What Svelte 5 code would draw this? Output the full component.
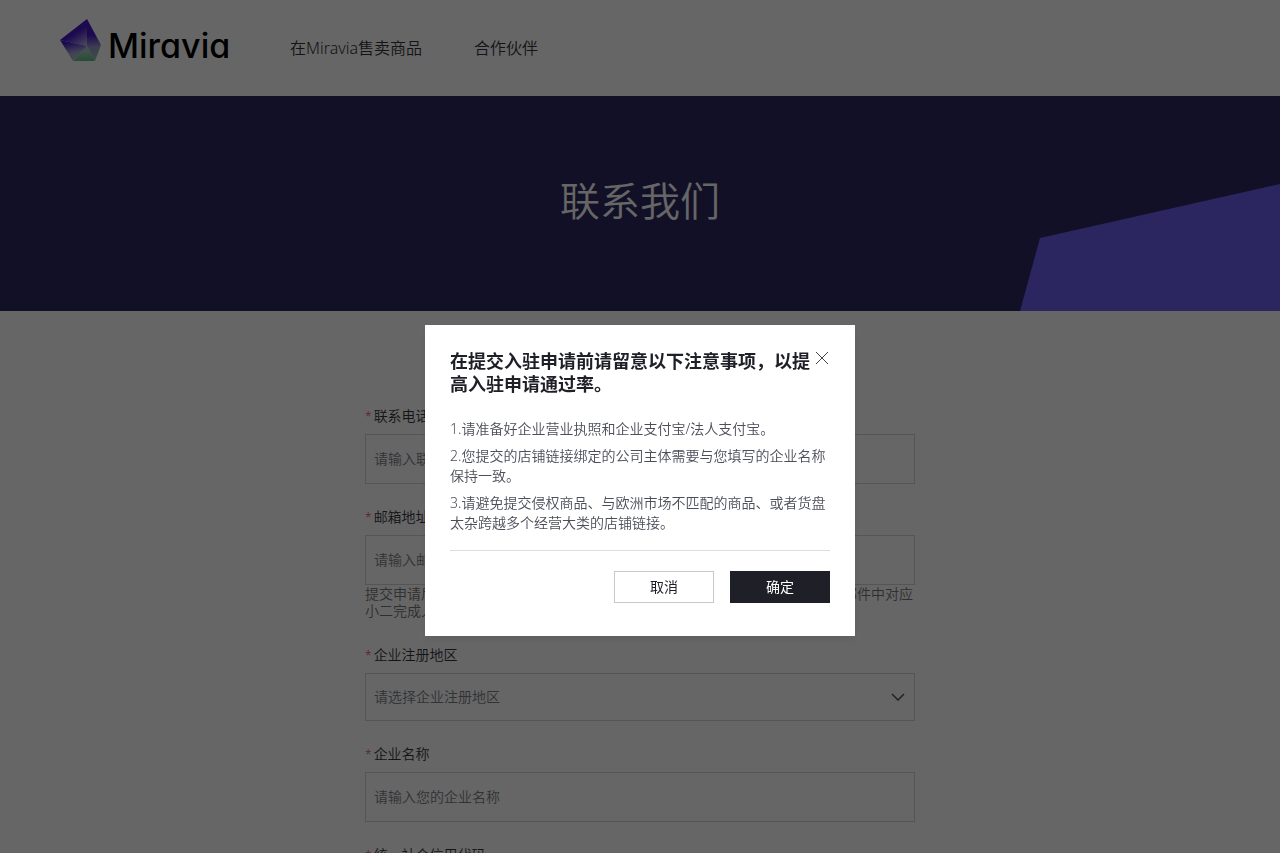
<script lang="ts">
	type Field = {
		id: string;
		label: string;
		placeholder: string;
		type: 'text' | 'tel' | 'email' | 'select';
		help?: string;
	};

	const navLinks = [
		{ name: '在Miravia售卖商品', href: '#sell' },
		{ name: '合作伙伴', href: '#partners' }
	];

	const fields: Field[] = [
		{ id: 'phone', label: '联系电话', placeholder: '请输入联系电话', type: 'tel' },
		{
			id: 'email',
			label: '邮箱地址',
			placeholder: '请输入邮箱地址',
			type: 'email',
			help: '提交申请后，我们会在10个工作日内通过邮件联系您，请留意邮箱通知，并与邮件中对应小二完成入驻。'
		},
		{ id: 'region', label: '企业注册地区', placeholder: '请选择企业注册地区', type: 'select' },
		{ id: 'company', label: '企业名称', placeholder: '请输入您的企业名称', type: 'text' },
		{ id: 'code', label: '统一社会信用代码', placeholder: '请输入统一社会信用代码', type: 'text' }
	];

	const notices = [
		'1.请准备好企业营业执照和企业支付宝/法人支付宝。',
		'2.您提交的店铺链接绑定的公司主体需要与您填写的企业名称保持一致。',
		'3.请避免提交侵权商品、与欧洲市场不匹配的商品、或者货盘太杂跨越多个经营大类的店铺链接。'
	];

	let open = $state(true);

	const close = (): void => {
		open = false;
	};
</script>

<svelte:head>
	<title>联系我们 | Miravia</title>
</svelte:head>

<header class="header">
	<a class="logo" href="#home" aria-label="Miravia">
		<svg width="41" height="43" viewBox="0 0 41 43" aria-hidden="true">
			<defs>
				<linearGradient id="gem-left" gradientUnits="userSpaceOnUse" x1="12" y1="8" x2="24" y2="27">
					<stop offset="0.3" stop-color="#4618c4" />
					<stop offset="1" stop-color="#b4aee6" />
				</linearGradient>
				<linearGradient id="gem-right" gradientUnits="userSpaceOnUse" x1="30" y1="2" x2="32" y2="42">
					<stop offset="0.35" stop-color="#4618c4" />
					<stop offset="0.65" stop-color="#9c98cc" />
					<stop offset="1" stop-color="#8cc4a4" />
				</linearGradient>
				<linearGradient id="gem-side" gradientUnits="userSpaceOnUse" x1="8" y1="20" x2="13" y2="42">
					<stop offset="0.15" stop-color="#4618c4" />
					<stop offset="0.65" stop-color="#a8a4d8" />
					<stop offset="1" stop-color="#9ccab4" />
				</linearGradient>
				<linearGradient id="gem-base" gradientUnits="userSpaceOnUse" x1="24" y1="24" x2="26" y2="42">
					<stop offset="0" stop-color="#b4b4d4" />
					<stop offset="0.5" stop-color="#a0ccb8" />
					<stop offset="1" stop-color="#5cc084" />
				</linearGradient>
			</defs>
			<path d="M27 27 35 42H13Z" fill="url(#gem-base)" />
			<path d="M27 0 0 21 27 27Z" fill="url(#gem-left)" />
			<path d="M27 0 27 27 35 42 41 26Z" fill="url(#gem-right)" />
			<path d="M0 21 13 42 27 27Z" fill="url(#gem-side)" />
		</svg>
		<span class="wordmark">Miravia</span>
	</a>
	<nav class="nav">
		{#each navLinks as link}
			<a href={link.href}>{link.name}</a>
		{/each}
	</nav>
</header>

<section class="banner">
	<h1>联系我们</h1>
	<svg class="banner-shape" width="260" height="127" viewBox="0 0 260 127" aria-hidden="true">
		<path d="M0 127 20 54 260 0V127Z" fill="#6c5cf0" />
	</svg>
</section>

<main>
	<form class="form">
		{#each fields as field}
			<div class="field">
				<label for={field.id}><span class="star">*</span>{field.label}</label>
				{#if field.type === 'select'}
					<div class="select">
						<select id={field.id}>
							<option value="">{field.placeholder}</option>
						</select>
						<svg width="14" height="8" viewBox="0 0 14 8" aria-hidden="true">
							<path d="M1 1 7 7 13 1" fill="none" stroke="#555" stroke-width="1.5" />
						</svg>
					</div>
				{:else}
					<input id={field.id} type={field.type} placeholder={field.placeholder} />
				{/if}
				{#if field.help}
					<p class="help">{field.help}</p>
				{/if}
			</div>
		{/each}
	</form>
</main>

{#if open}
	<div class="overlay">
		<div class="dialog" role="dialog" aria-modal="true" aria-labelledby="dialog-title">
			<h2 id="dialog-title">在提交入驻申请前请留意以下注意事项，以提高入驻申请通过率。</h2>
			<button class="close" type="button" aria-label="关闭" onclick={close}>
				<svg width="12" height="12" viewBox="0 0 12 12" aria-hidden="true">
					<path d="M0 0 12 12M12 0 0 12" fill="none" stroke="#444" />
				</svg>
			</button>
			<div class="notices">
				{#each notices as notice}
					<p>{notice}</p>
				{/each}
			</div>
			<div class="actions">
				<button type="button" onclick={close}>取消</button>
				<button class="primary" type="button" onclick={close}>确定</button>
			</div>
		</div>
	</div>
{/if}

<style>
	:global(body) {
		margin: 0;
		overflow: hidden;
		background: #fff;
		color: #33343c;
		font-family: 'Noto Sans', 'Noto Sans CJK SC', sans-serif;
		font-size: 14px;
		font-weight: 350;
	}

	a {
		color: inherit;
		text-decoration: none;
	}

	button,
	input,
	select {
		box-sizing: border-box;
		font: inherit;
		border-radius: 0;
	}

	.header {
		display: flex;
		align-items: center;
		height: 96px;
		padding: 0 60px;
	}

	.logo {
		display: flex;
		align-items: center;
		gap: 7px;
		width: 230px;
		height: 43px;
		padding-bottom: 16px;
	}

	.wordmark {
		padding-top: 12px;
		font-family: Inter, sans-serif;
		font-size: 34px;
		font-weight: 500;
		line-height: 42px;
		font-feature-settings: 'cv11';
		color: #000;
	}

	.nav {
		display: flex;
		gap: 52px;
		font-size: 16px;
		line-height: 24px;
	}

	.banner {
		position: relative;
		display: flex;
		align-items: center;
		justify-content: center;
		box-sizing: border-box;
		height: 215px;
		padding-bottom: 6px;
		background: #2d2861;
	}

	.banner h1 {
		margin: 0;
		font-size: 40px;
		font-weight: 350;
		line-height: 60px;
		color: #fff;
	}

	.banner-shape {
		position: absolute;
		right: 0;
		bottom: 0;
	}

	.form {
		max-width: 550px;
		margin: 0 auto;
		padding: 96px 16px;
	}

	.field {
		margin-bottom: 24px;
	}

	label {
		display: block;
		margin-bottom: 9px;
		line-height: 18px;
	}

	.star {
		margin-right: 2px;
		font-size: 12px;
		line-height: 1;
		color: #e8404a;
	}

	input,
	select {
		display: block;
		width: 100%;
		height: 50px;
		padding: 0 8px 2px;
		border: 1px solid #d4d4d8;
		background: #fff;
		color: #7c7e88;
	}

	input::placeholder {
		color: #7c7e88;
		opacity: 1;
	}

	.select {
		position: relative;
	}

	select {
		height: 48px;
		appearance: none;
	}

	.select svg {
		position: absolute;
		top: 20px;
		right: 10px;
		pointer-events: none;
	}

	.help {
		margin: 0;
		padding-bottom: 3px;
		line-height: 17px;
		color: #777;
	}

	.overlay {
		position: fixed;
		inset: 0;
		z-index: 10;
		display: flex;
		align-items: flex-start;
		justify-content: center;
		padding-top: 325px;
		background: rgba(0, 0, 0, 0.6);
	}

	.dialog {
		position: relative;
		box-sizing: border-box;
		width: 430px;
		max-width: 100%;
		padding: 25px 25px 33px;
		background: #fff;
		box-shadow: 0 4px 8px rgba(0, 0, 0, 0.08);
	}

	.dialog h2 {
		margin: 0 16px 23px 0;
		font-size: 18px;
		font-weight: 700;
		line-height: 23px;
		color: #1e1f27;
	}

	.close {
		position: absolute;
		top: 23px;
		right: 23px;
		display: flex;
		align-items: center;
		justify-content: center;
		width: 20px;
		height: 20px;
		padding: 0;
		border: 0;
		background: none;
		cursor: pointer;
	}

	.notices {
		display: grid;
		gap: 7px;
		padding-bottom: 17px;
		border-bottom: 1px solid #ddd;
		line-height: 20px;
		color: #4c4e58;
	}

	.notices p {
		margin: 0;
	}

	.actions {
		display: flex;
		justify-content: flex-end;
		gap: 16px;
		margin-top: 20px;
	}

	.actions button {
		width: 100px;
		height: 32px;
		padding: 0 0 2px;
		border: 1px solid #c8c8cc;
		background: #fff;
		color: #1e1f27;
		font-weight: 400;
		cursor: pointer;
	}

	.actions .primary {
		border-color: #1e1f27;
		background: #1e1f27;
		color: #fff;
	}
</style>
